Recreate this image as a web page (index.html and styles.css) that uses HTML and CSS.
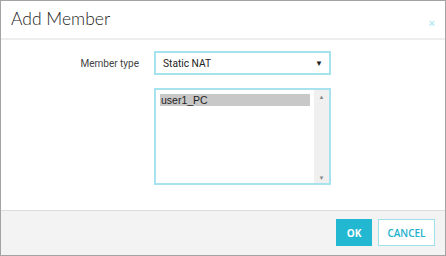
FILE: index.html
```html
<!DOCTYPE html>
<html>
<head>
    <meta charset="UTF-8">
    <title>Add Member</title>
    <link rel="stylesheet" href="styles.css">
</head>
<body>
    <div class="dialog">
        <div class="header">
            <span class="title">Add Member</span>
            <button class="close-btn">×</button>
        </div>
        <div class="content">
            <div class="row">
                <div class="label">Member type</div>
                <div class="select">
                    <span>Static NAT</span>
                    <span class="arrow">▼</span>
                </div>
            </div>
            <div class="row">
                <div class="label"></div>
                <div class="listbox">
                    <div class="items">
                        <div class="item selected">user1_PC</div>
                    </div>
                    <div class="scrollbar">
                        <span class="scroll-arrow">▲</span>
                        <span class="scroll-arrow">▼</span>
                    </div>
                </div>
            </div>
        </div>
        <div class="footer">
            <button class="btn btn-ok">OK</button>
            <button class="btn btn-cancel">CANCEL</button>
        </div>
    </div>
</body>
</html>
```

FILE: styles.css
```css
body {
    margin: 0;
    padding: 0;
    font-family: Roboto, "Liberation Sans", Arial, sans-serif;
    background-color: #fff;
}
.dialog {
    width: 446px;
    height: 256px;
    box-sizing: border-box;
    border: 1px solid #a3a3a3;
    display: flex;
    flex-direction: column;
}
.header {
    height: 37px;
    display: flex;
    justify-content: space-between;
    align-items: center;
    padding: 0 10px;
    border-bottom: 2px solid #eeeeee;
    flex-shrink: 0;
}
.title {
    font-family: Lato, sans-serif;
    font-weight: 300;
    font-size: 17.5px;
    color: #222;
    margin-top: -2px;
}
.close-btn {
    background: none;
    border: none;
    padding: 0;
    margin-top: 6px;
    color: #b5eaf3;
    font-size: 11px;
    font-weight: bold;
    cursor: pointer;
}
.content {
    flex: 1;
    padding-top: 11px;
    display: flex;
    flex-direction: column;
    gap: 13px;
}
.row {
    display: grid;
    grid-template-columns: 138px 177px;
    column-gap: 15px;
    align-items: center;
}
.label {
    text-align: right;
    font-size: 10px;
    color: #444;
}
.select {
    height: 20px;
    border: 2px solid #a6e3ee;
    display: flex;
    justify-content: space-between;
    align-items: center;
    padding: 0 6px 0 7px;
    font-size: 10.2px;
    color: #222;
}
.arrow {
    font-size: 8px;
    color: #222;
}
.listbox {
    height: 93px;
    border: 2px solid #a6e3ee;
    display: flex;
}
.items {
    flex: 1;
    padding: 4px 4px 0 4px;
}
.item {
    font-family: "Liberation Sans", Arial, sans-serif;
    font-size: 10.5px;
    color: #222;
    height: 12px;
    line-height: 12px;
    padding-left: 1px;
}
.selected {
    background-color: #c8c8c8;
}
.scrollbar {
    width: 15px;
    background-color: #f0f0f0;
    display: flex;
    flex-direction: column;
    justify-content: space-between;
    align-items: center;
    padding: 3px 0 2px 0;
}
.scroll-arrow {
    font-size: 6px;
    color: #888;
}
.footer {
    height: 45px;
    box-sizing: border-box;
    border-top: 1px solid #dcdcdc;
    background-color: #f3f3f3;
    display: flex;
    justify-content: flex-end;
    align-items: center;
    gap: 6px;
    padding: 0 10px 1px 0;
    flex-shrink: 0;
}
.btn {
    height: 27px;
    font-family: "Open Sans", sans-serif;
    font-size: 10px;
    font-weight: 600;
    padding: 0;
    cursor: pointer;
}
.btn-ok {
    width: 36px;
    background-color: #22b8d1;
    border: 1px solid #22b8d1;
    color: #fff;
    font-weight: 700;
}
.btn-cancel {
    width: 57px;
    background-color: #fff;
    border: 1px solid #9fe0ec;
    color: #22b0cc;
}
```
